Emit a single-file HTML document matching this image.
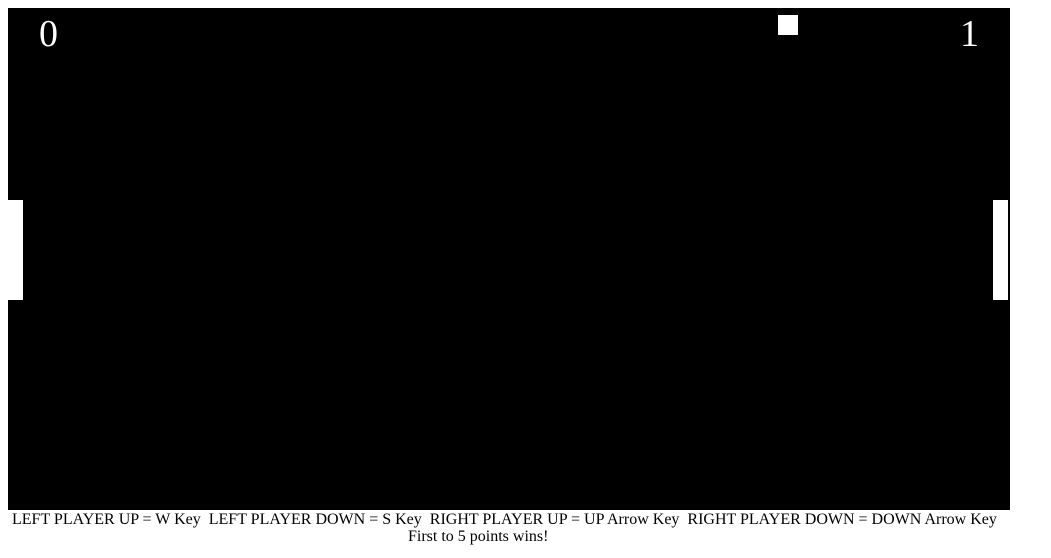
<!DOCTYPE html>
<html><head><style>
body{margin:0;background:#fff;width:1051px;height:558px;overflow:hidden;position:relative;font-family:"Liberation Serif",serif;}
#c{position:absolute;left:8px;top:8px;width:1002px;height:502px;background:#000;}
.w{position:absolute;background:#fff;}
.s{position:absolute;color:#fff;font-size:38px;line-height:1;top:15px;}
.t{position:absolute;font-size:16px;line-height:17px;white-space:pre;color:#000;}
</style></head><body>
<div id="c"></div>
<div class="w" style="left:8px;top:200px;width:15px;height:100px"></div>
<div class="w" style="left:993px;top:200px;width:15px;height:100px"></div>
<div class="w" style="left:778px;top:15px;width:20px;height:20px"></div>
<div class="s" style="left:39px">0</div>
<div class="s" style="left:960px">1</div>
<div class="t" style="left:12px;top:511px">LEFT PLAYER UP = W Key  LEFT PLAYER DOWN = S Key  RIGHT PLAYER UP = UP Arrow Key  RIGHT PLAYER DOWN = DOWN Arrow Key</div>
<div class="t" style="left:408px;top:528px">First to 5 points wins!</div>
</body></html>
